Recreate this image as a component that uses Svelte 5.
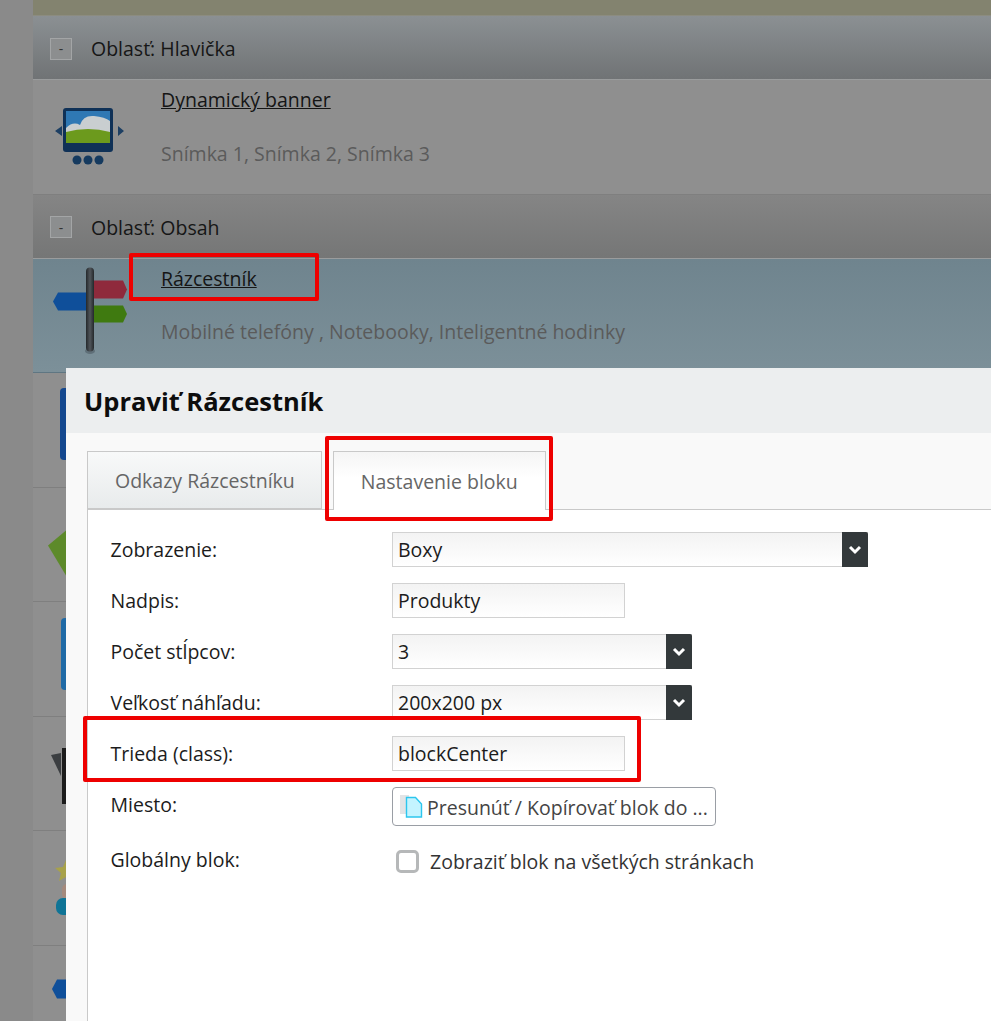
<script>
  // pozadie: zoznam blokov pod modalnym oknom
  const groups = [
    {
      name: "Oblasť: Hlavička",
      rows: [{ icon: "banner", title: "Dynamický banner", sub: "Snímka 1, Snímka 2, Snímka 3" }],
    },
    {
      name: "Oblasť: Obsah",
      muted: true,
      rows: [
        { icon: "sign", title: "Rázcestník", sub: "Mobilné telefóny , Notebooky, Inteligentné hodinky", active: true },
        { icon: "blue" },
        { icon: "green" },
        { icon: "blue2" },
        { icon: "dark" },
        { icon: "person" },
        { icon: "sign2" },
      ],
    },
  ];

  const fields = [
    { label: "Zobrazenie:", value: "Boxy", type: "select", wide: true },
    { label: "Nadpis:", value: "Produkty", type: "input" },
    { label: "Počet stĺpcov:", value: "3", type: "select" },
    { label: "Veľkosť náhľadu:", value: "200x200 px", type: "select" },
    { label: "Trieda (class):", value: "blockCenter", type: "input" },
  ];
</script>

<div class="page">
  <div class="strip"></div>
  <div class="list">
    {#each groups as group}
      <div class="group-head" class:muted={group.muted}>
        <span class="toggle">-</span>
        <span>{group.name}</span>
      </div>
      {#each group.rows as row}
        <div class="row" class:active={row.active}>
          <svg class="thumb" width="90" height="110" viewBox="0 0 90 110">
            <defs>
              <linearGradient id="pole" x1="0" x2="1" y1="0" y2="0">
                <stop offset="0" stop-color="#24282b" />
                <stop offset="0.5" stop-color="#50555a" />
                <stop offset="1" stop-color="#24282b" />
              </linearGradient>
            </defs>
            {#if row.icon === "banner"}
              <path d="M20 48l-7 5 7 5zM76 48l6 5-6 5z" fill="#1d3f63" />
              <rect x="21" y="30" width="50" height="44" rx="3" fill="#0f3157" />
              <rect x="24" y="33" width="44" height="32" fill="#2f78b4" />
              <path d="M24 50q7-7 14-3 3-10 14-9t16 5v18H24z" fill="#c9ced0" />
              <path d="M24 54q22-6 44 0v11H24z" fill="#6c9a1d" />
              <circle cx="35" cy="82" r="4.500" fill="#153a5f" />
              <circle cx="46" cy="82" r="4.500" fill="#153a5f" />
              <circle cx="57" cy="82" r="4.500" fill="#153a5f" />
            {:else if row.icon === "sign"}
              <path d="M52 23.500h29l4 9-4 9H52z" fill="#8f2a3c" />
              <path d="M52 48.500h29l4 8.500-4 8.500H52z" fill="#3f7a10" />
              <path d="M16 35.500h29v18H16l-5-9z" fill="#0f4f9a" />
              <ellipse cx="48" cy="94" rx="5" ry="3" fill="#5f6f78" />
              <rect x="44" y="10.500" width="8" height="84" rx="4" fill="url(#pole)" />
            {:else if row.icon === "blue"}
              <rect x="18" y="17" width="40" height="72" rx="4" fill="#14488f" />
            {:else if row.icon === "green"}
              <path d="M6 59.500l18-15v45z" fill="#5d8a2a" />
            {:else if row.icon === "blue2"}
              <rect x="19" y="18" width="40" height="72" rx="4" fill="#1f6aa6" />
            {:else if row.icon === "dark"}
              <path d="M9 40l10-2v23z" fill="#3b3e41" />
              <rect x="20" y="33" width="20" height="56" fill="#1c1c1c" />
            {:else if row.icon === "person"}
              <path d="M24 31l3 7 8 1-6 5 2 8-7-4-7 4 2-8-6-5 8-1z" fill="#a8a24a" />
              <rect x="20" y="55" width="20" height="15" rx="5" fill="#a58a7d" />
              <rect x="14" y="69" width="30" height="17" rx="7" fill="#0f7496" />
            {:else if row.icon === "sign2"}
              <path d="M15 35.500h30v19H15l-5-9.500z" fill="#0f4f9a" />
            {/if}
          </svg>
          <div class="row-text">
            {#if row.title}
              <a class="title" href="#top">{row.title}</a>
              <p class="sub">{row.sub}</p>
            {/if}
          </div>
        </div>
      {/each}
    {/each}
  </div>

  <div class="modal">
    <h2>Upraviť Rázcestník</h2>
    <div class="modal-body">
      <div class="tabs">
        <div class="tab">Odkazy Rázcestníku</div>
        <div class="tab current">Nastavenie bloku</div>
      </div>
      <div class="panel">
        <div class="form">
          {#each fields as f}
            <span class="label">{f.label}</span>
            {#if f.type === "select"}
              <div class="control select" class:wide={f.wide}>
                <span class="value">{f.value}</span>
                <span class="arrow">
                  <svg width="14" height="10" viewBox="0 0 14 10">
                    <path d="M2 2l5 5 5-5" fill="none" stroke="#fff" stroke-width="3" />
                  </svg>
                </span>
              </div>
            {:else}
              <div class="control input"><span class="value">{f.value}</span></div>
            {/if}
          {/each}
          <span class="label">Miesto:</span>
          <button class="move">
            <svg width="24" height="24" viewBox="0 0 24 24">
              <rect x="0" y="0" width="9" height="19" fill="#e2e4e6" />
              <path d="M6.500 2.500h9l6 6.500v13h-15z" fill="#c4f4ff" stroke="#2cc6ee" stroke-width="1.400" />
            </svg>
            <span>Presunúť / Kopírovať blok do ...</span>
          </button>
          <span class="label global">Globálny blok:</span>
          <label class="check">
            <span class="box"></span>
            <span>Zobraziť blok na všetkých stránkach</span>
          </label>
        </div>
      </div>
    </div>
  </div>

  <div class="mark mark-link"></div>
  <div class="mark mark-tab"></div>
  <div class="mark mark-class"></div>
</div>

<style>
  :global(body) {
    margin: 0;
    font-family: "Open Sans", "Noto Sans", sans-serif;
  }

  .page {
    position: relative;
    height: 1021px;
    overflow: hidden;
    background: #8a8a8a;
  }

  .strip {
    height: 16px;
    box-sizing: border-box;
    margin-left: 33px;
    background: #83836f;
    border-bottom: 1px solid #8c8c80;
  }

  .list {
    margin-left: 33px;
    background: #8e8e8e;
  }

  .group-head {
    height: 64px;
    box-sizing: border-box;
    display: flex;
    align-items: center;
    gap: 19px;
    padding: 2px 0 0 17px;
    font-size: 19.5px;
    color: #161616;
    background: linear-gradient(#8b9093, #707375);
    border-bottom: 1px solid #9a9c9d;
  }

  .group-head.muted {
    background: linear-gradient(#858585, #757676);
  }

  .toggle {
    width: 22px;
    height: 22px;
    box-sizing: border-box;
    border: 1px solid #a3a5a6;
    background: #8c8e8f;
    display: flex;
    align-items: center;
    justify-content: center;
    font-size: 14px;
    color: #333;
  }

  .row {
    height: 114.5px;
    box-sizing: border-box;
    display: flex;
    padding-left: 9px;
    border-bottom: 1px solid #7f7f7f;
    background: #8f8f8f;
  }

  .row.active {
    background: linear-gradient(#6f848e, #7c9099);
    border-bottom: 1px solid #5f7682;
  }

  .thumb {
    flex: none;
    margin-top: -2px;
  }

  .row-text {
    padding: 7px 0 0 29px;
  }

  .title {
    font-size: 19.5px;
    line-height: 26px;
    color: #151515;
    text-decoration: underline;
  }

  .sub {
    margin: 26.5px 0 0;
    font-size: 19.5px;
    line-height: 28px;
    color: #5b5b5b;
  }

  .modal {
    position: absolute;
    left: 66px;
    top: 368px;
    width: 1000px;
    height: 720px;
    background: #f9f9f9;
  }

  h2 {
    margin: 0;
    height: 65px;
    box-sizing: border-box;
    padding-left: 18px;
    font-size: 25.5px;
    font-weight: 700;
    line-height: 66px;
    color: #0d0d0d;
    background: #eceeef;
  }

  .modal-body {
    padding: 18px 0 0 21px;
  }

  .tabs {
    display: flex;
    gap: 11px;
    height: 58px;
  }

  .tab {
    box-sizing: border-box;
    height: 58px;
    padding: 0 27px;
    display: flex;
    align-items: center;
    font-size: 19.5px;
    color: #666;
    border: 1px solid #c9c9c9;
    background: linear-gradient(#f8f9f9, #e8ebec);
  }

  .tab:first-child {
    padding-right: 26px;
  }

  .tab.current {
    position: relative;
    z-index: 1;
    height: 59px;
    border-bottom: none;
    background: linear-gradient(#f5f5f5, #fff 45%);
  }

  .panel {
    height: 600px;
    box-sizing: border-box;
    border-top: 1px solid #c9c9c9;
    border-left: 1px solid #c9c9c9;
    background: #fff;
    padding: 22px 0 0 22px;
  }

  .form {
    display: grid;
    grid-template-columns: 282px 1fr;
    grid-auto-rows: 35px;
    row-gap: 16px;
    align-items: center;
    font-size: 19.5px;
    color: #1c1c1c;
  }

  .label {
    padding-left: 0.5px;
  }

  .control {
    box-sizing: border-box;
    height: 35px;
    display: flex;
    align-items: center;
    justify-content: space-between;
    border: 1px solid #d2d2d2;
    background: linear-gradient(#f3f3f3, #fff);
  }

  .input {
    width: 233px;
  }

  .select {
    width: 300px;
  }

  .select.wide {
    width: 476px;
  }

  .value {
    padding-left: 5px;
  }

  .arrow {
    width: 26px;
    height: 35px;
    margin-right: -1px;
    display: flex;
    align-items: center;
    justify-content: center;
    background: #33393b;
    border-radius: 0 2px 0 0;
  }

  .move {
    box-sizing: border-box;
    width: 324px;
    height: 39px;
    margin-top: 3px;
    padding: 2px 0 0 7px;
    display: flex;
    align-items: center;
    gap: 3px;
    font: inherit;
    color: #444;
    white-space: nowrap;
    background: #fff;
    border: 1px solid #9a9ea5;
    border-radius: 4px;
  }

  .global {
    margin-top: 7px;
  }

  .check {
    display: flex;
    align-items: center;
    gap: 11px;
    margin: 12px 0 0 4px;
    color: #333;
  }

  .box {
    width: 23px;
    height: 23px;
    box-sizing: border-box;
    border: 3px solid #b6b8b9;
    border-radius: 5px;
    background: #fff;
  }

  /* cervene oznacenia cez obrazovku */
  .mark {
    position: absolute;
    box-sizing: border-box;
    border: 4px solid #ee0000;
    border-radius: 2px;
  }

  .mark-link {
    left: 129px;
    top: 253px;
    width: 190px;
    height: 48px;
  }

  .mark-tab {
    left: 325px;
    top: 436px;
    width: 228px;
    height: 85px;
  }

  .mark-class {
    left: 83px;
    top: 716px;
    width: 558px;
    height: 66px;
  }
</style>
